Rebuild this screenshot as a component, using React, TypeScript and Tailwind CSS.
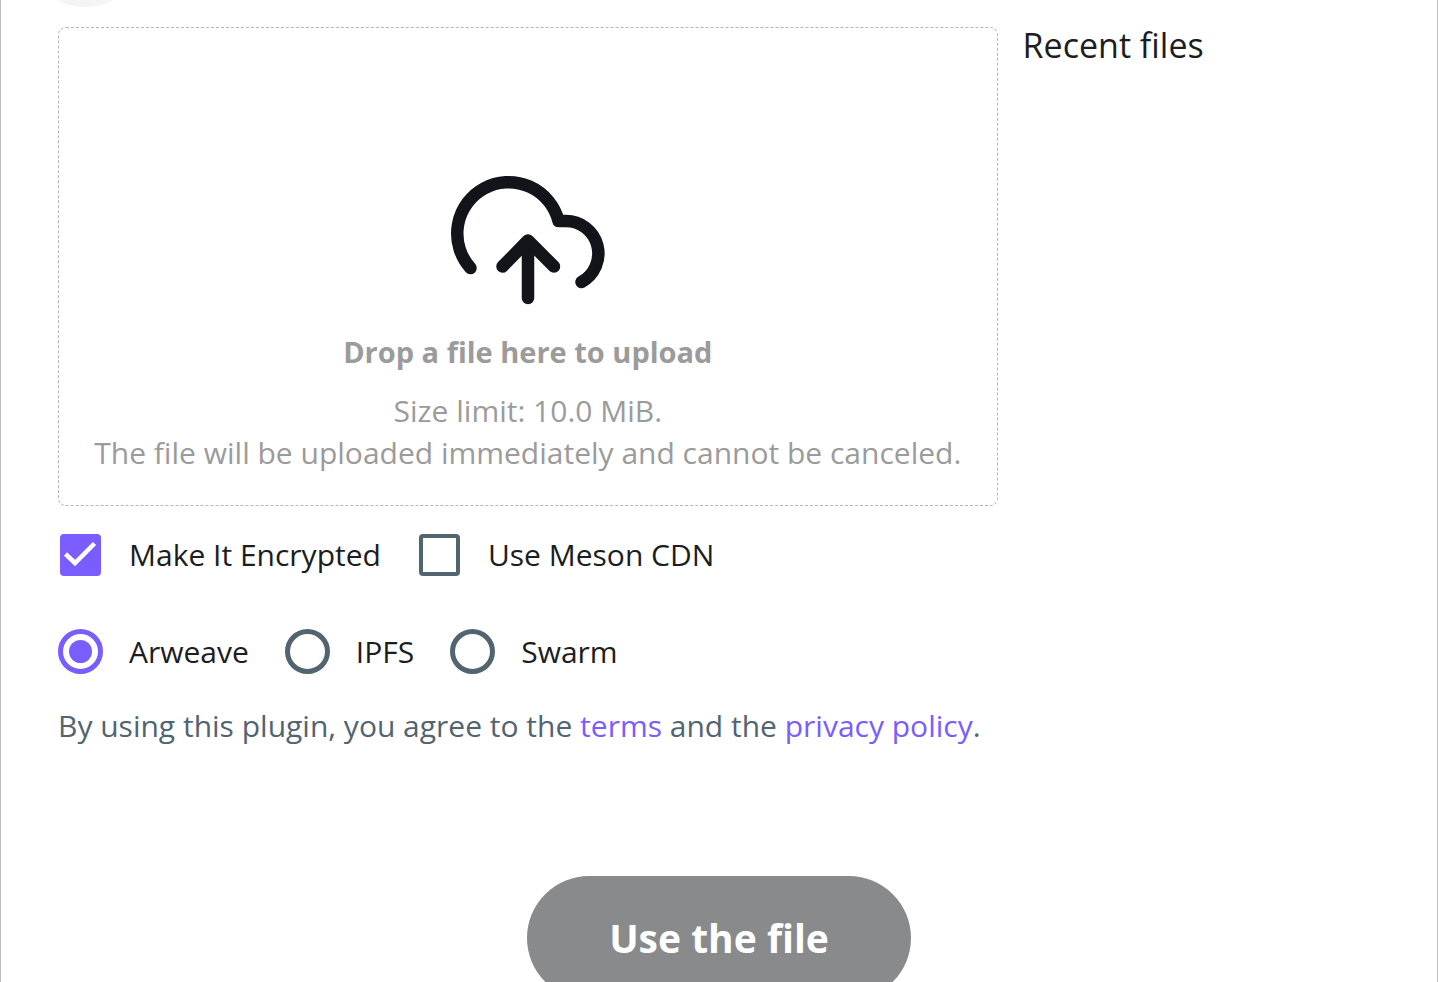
import { useState } from 'react';
import type { ReactNode } from 'react';

type OptionProps = {
  id: string;
  label: string;
  children: ReactNode;
};

const storages = ['Arweave', 'IPFS', 'Swarm'];

function UploadIcon() {
  return (
    <svg
      className="w-[156px] h-[130px]"
      viewBox="450 175 156 130"
      fill="none"
      stroke="#111418"
      strokeWidth={12.5}
      strokeLinecap="round"
      strokeLinejoin="round"
      aria-hidden="true"
    >
      <path d="M470.5 268A51.400 51.400 0 1 1 558.500 221H565.500A32.500 32.500 0 0 1 581.500 282" />
      <path d="M502.500 266.500L528 240.500L554 266.500M528 242V298" />
    </svg>
  );
}

function Option({ id, label, children }: OptionProps) {
  return (
    <div className="flex items-center gap-[26px]">
      <span className="relative flex w-[45px] h-[45px] items-center justify-center">{children}</span>
      <label htmlFor={id}>{label}</label>
    </div>
  );
}

function Checkbox({ id, label, checked, onChange }: { id: string; label: string; checked: boolean; onChange: (v: boolean) => void }) {
  return (
    <Option id={id} label={label}>
      <input
        id={id}
        type="checkbox"
        checked={checked}
        onChange={e => onChange(e.target.checked)}
        className="peer appearance-none w-[41px] h-[42px] rounded-[4px] border-4 border-[#536471] checked:bg-[#7b5cff] checked:border-[#7b5cff]"
      />
      <svg
        className="pointer-events-none absolute inset-0 hidden w-full h-full peer-checked:block"
        viewBox="0 0 45 45"
        fill="none"
        stroke="white"
        strokeWidth={4.5}
        aria-hidden="true"
      >
        <path d="M7.500 22L17 31L36.500 11.500" />
      </svg>
    </Option>
  );
}

export default function App() {
  const [encrypted, setEncrypted] = useState(true);
  const [cdn, setCdn] = useState(false);
  const [storage, setStorage] = useState('Arweave');

  return (
    <div className="h-screen overflow-hidden border-x border-[#bdbdbd] bg-white text-[30px] leading-[42px] text-[#1c1d1f] font-['Open_Sans','Noto_Sans',sans-serif]">
      {/* Header, scrolled almost out of view */}
      <header className="flex h-[7px] items-end overflow-hidden px-6">
        <div className="w-[120px] h-[120px] shrink-0 rounded-full bg-[#f4f4f4]" />
      </header>

      <main className="pl-[57px] pr-[54px] pt-5">
        <div className="grid grid-cols-[minmax(0,73fr)_minmax(0,28fr)] gap-[25px]">
          {/* Drop zone */}
          <section className="flex flex-col items-center rounded-lg border border-dashed border-[#b5b5b5] pt-[147px] pb-[31px] text-center text-[#9b9b9b]">
            <UploadIcon />
            <p className="mt-[26px] text-[29px] font-bold">Drop a file here to upload</p>
            <p className="mt-[17px]">
              Size limit: 10.0 MiB.
              <br />
              The file will be uploaded immediately and cannot be canceled.
            </p>
          </section>

          <aside>
            <h2 className="text-[34px] leading-[36px]">Recent files</h2>
          </aside>
        </div>

        {/* Options */}
        <div className="mt-[26px] flex gap-9">
          <Checkbox id="encrypted" label="Make It Encrypted" checked={encrypted} onChange={setEncrypted} />
          <Checkbox id="cdn" label="Use Meson CDN" checked={cdn} onChange={setCdn} />
        </div>

        <div className="mt-[52px] flex gap-9">
          {storages.map(name => (
            <Option key={name} id={name} label={name}>
              <input
                id={name}
                type="radio"
                name="storage"
                checked={storage === name}
                onChange={() => setStorage(name)}
                className="peer appearance-none w-[45px] h-[45px] rounded-full border-[5px] border-[#536471] checked:border-[#7b5cff]"
              />
              <span className="pointer-events-none absolute inset-[11px] hidden rounded-full bg-[#7b5cff] peer-checked:block" />
            </Option>
          ))}
        </div>

        <p className="mt-[31px] text-[#536471]">
          By using this plugin, you agree to the{' '}
          <a href="#terms" className="text-[#7b5cff]">terms</a> and the{' '}
          <a href="#privacy" className="text-[#7b5cff]">privacy policy</a>.
        </p>
      </main>

      <footer className="mt-[129px] flex justify-center">
        <button type="button" className="h-[124px] w-96 rounded-full bg-[#888a8b] text-[39px] font-bold text-white">
          Use the file
        </button>
      </footer>
    </div>
  );
}
